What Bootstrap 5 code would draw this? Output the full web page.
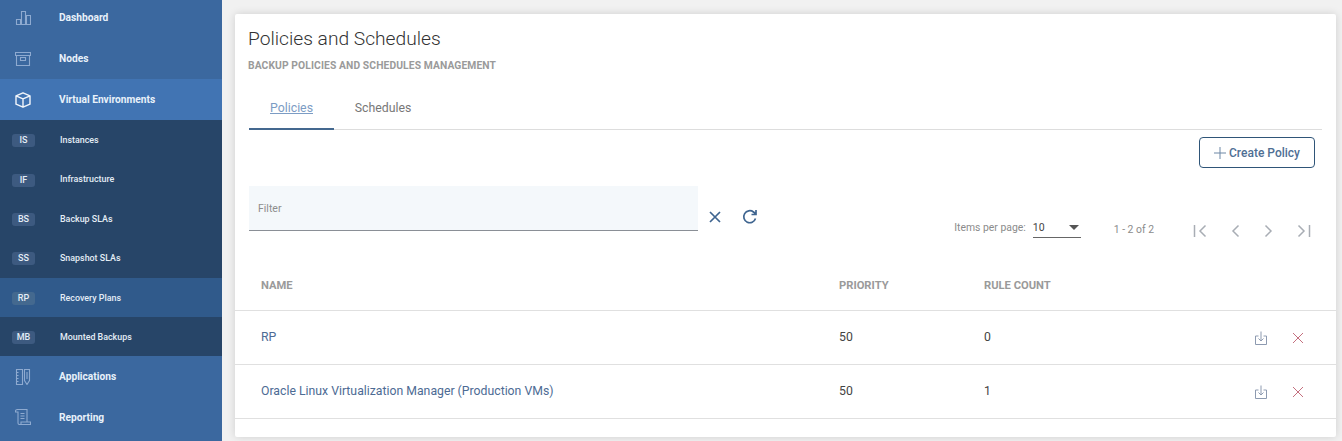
<!DOCTYPE html>
<html lang="en">
<head>
  <meta charset="UTF-8">
  <meta name="viewport" content="width=device-width, initial-scale=1.0">
  <title>Policies and Schedules</title>
  <link href="https://cdn.jsdelivr.net/npm/bootstrap@5.3.2/dist/css/bootstrap.min.css" rel="stylesheet">
  <style>
    html, body { height: 441px; overflow: hidden; }
    body { font-family: Roboto, "Liberation Sans", sans-serif; background: #f1f1f1; color: #333; }
    .shell { height: 441px; }

    .side { width: 222px; flex: none; background: #3b689f; color: #fff; }
    .side-main { height: 41px; font-size: 10.2px; font-weight: 700; color: #e8f1fa; }
    .side-first { height: 38px; padding-bottom: 3px; }
    .side-last { padding-bottom: 4px; }
    .side-main.on { background: #4174b3; }
    .side-ico { width: 59px; flex: none; padding-left: 15px; }
    .side-ico svg { display: block; fill: none; stroke: #8eaad0; stroke-width: 1.1; }
    .side-main.on .side-ico svg { stroke: #f2f6fb; stroke-width: 1.4; }
    .side-sub { height: 39.4px; padding-top: 2px; background: #274568; font-size: 8.9px; font-weight: 500; color: #e4edf6; }
    .side-sub.lit { background: #305a8b; }
    .side-tag { width: 23px; height: 13px; margin: 0 25px 0 12px; flex: none; border-radius: 3px; background: #3d5a80; font-size: 9px; font-weight: 500; line-height: 13px; text-align: center; color: #e4edf6; }
    .side-sub.lit .side-tag { background: #44698f; }

    .page { padding: 14px 6px 4px 13px; min-width: 0; }
    .sheet { height: 423px; border: 0; border-radius: 2px; box-shadow: 0 0 8px rgba(0, 0, 0, .14); overflow: hidden; }
    .sheet-title { margin: 13px 0 0 13px; font-size: 19.2px; font-weight: 300; line-height: 24px; color: #333; }
    .sheet-sub { margin: 9px 0 0 13px; font-size: 10.3px; font-weight: 700; line-height: 12px; letter-spacing: .1px; color: #9a9a9a; text-transform: uppercase; }

    .tabs-row { margin: 19px 14px 0 14px; height: 39px; border-bottom: 1px solid #ddd; flex-wrap: nowrap; }
    .tabs-row .nav-link { width: 85px; height: 39px; padding: 0; font-size: 12.3px; line-height: 35px; text-align: center; color: #777; border-bottom: 2px solid transparent; }
    .tabs-row .nav-link.active { color: #7c9cc4; text-decoration: underline; border-bottom-color: #44688f; }
    .tabs-row .nav-item + .nav-item .nav-link { width: 98px; }

    .btn-make { width: 116px; height: 31px; margin: 7px 21px 0 0; padding: 1px 0 0; border: 1px solid #2f5578; border-radius: 4px; font-size: 12px; font-weight: 500; line-height: 29px; color: #4f6f94; }
    .btn-make svg { margin-right: 3px; vertical-align: -2px; stroke: #6c87a5; }

    .tools { height: 45px; margin: 18px 0 0 14px; }
    .filter-box { width: 449px; height: 45px; flex: none; padding: 0 9px; border: 0; border-bottom: 1px solid #8a8f96; border-radius: 0; background: #f4f8fb; font-size: 10.5px; color: #777; }
    .filter-box::placeholder { color: #8d8d8d; }
    .tool-ico { display: block; flex: none; margin: 24px 0 0 10px; stroke: #3f6590; fill: none; stroke-width: 1.7; }
    .tool-ico.tool-re { margin: 23px 0 0 20px; }
    .pager { margin-left: auto; padding: 31px 25px 0 0; font-size: 10.4px; color: #8b8b8b; }
    .pager-lbl { margin-top: 3px; }
    .per-box { width: 48px; height: 21px; margin-left: 7px; border-bottom: 1px solid #666; color: #444; font-size: 10.5px; line-height: 21px; }
    .per-caret { width: 0; height: 0; margin-right: 2px; border-left: 5px solid transparent; border-right: 5px solid transparent; border-top: 5px solid #555; }
    .pager-count { margin: 5px 39px 0 33px; }
    .pager-btns { margin-top: 7px; gap: 24px; }
    .pager-btns svg { display: block; fill: none; stroke: #a8adb4; stroke-width: 1.5; }

    .grid-t { margin: 31px 0 0; table-layout: fixed; font-size: 12.25px; }
    .grid-t th, .grid-t td { padding: 0; vertical-align: middle; border-bottom: 1px solid #e0e0e0; }
    .grid-t th { height: 48px; padding-top: 2px; font-size: 11.2px; font-weight: 700; color: #9a9a9a; text-transform: uppercase; }
    .grid-t td { height: 54px; color: #444; }
    .grid-t th.col-n, .grid-t td.col-n { padding-left: 26px; width: 604px; }
    .col-p { width: 145px; }
    .col-a { text-align: right; padding-right: 32px !important; }
    .grid-t a { color: #4d6b94; text-decoration: none; }
    .act-ico { display: inline-block; margin-left: 22px; fill: none; vertical-align: middle; }
    .act-save { stroke: #8d9ab0; }
    .act-del { stroke: #c4707f; }
  </style>
</head>
<body>
  <div class="shell d-flex">
    <aside class="side d-flex flex-column">
      <div class="side-main side-first d-flex align-items-center">
        <span class="side-ico"><svg width="16" height="16" viewBox="0 0 16 16"><path d="M1.500 9.500h4v5h-4zM6.500 1.500h4v13h-4zM11.500 5.500h4v9h-4z"/></svg></span>Dashboard
      </div>
      <div class="side-main d-flex align-items-center">
        <span class="side-ico"><svg width="16" height="16" viewBox="0 0 16 16"><path d="M.5 1.500h15v3H.5zM1.500 4.500v10h13v-10M5.500 6.500h5v3h-5z"/></svg></span>Nodes
      </div>
      <div class="side-main on d-flex align-items-center">
        <span class="side-ico"><svg width="16" height="16" viewBox="0 0 16 16"><path d="M8 .8l7 3v8.400l-7 3-7-3V3.800zM1 3.800l7 3 7-3M8 6.800v8.400" stroke-linejoin="round"/></svg></span>Virtual Environments
      </div>
      <div class="side-sub d-flex align-items-center"><span class="side-tag">IS</span>Instances</div>
      <div class="side-sub d-flex align-items-center"><span class="side-tag">IF</span>Infrastructure</div>
      <div class="side-sub d-flex align-items-center"><span class="side-tag">BS</span>Backup SLAs</div>
      <div class="side-sub d-flex align-items-center"><span class="side-tag">SS</span>Snapshot SLAs</div>
      <div class="side-sub lit d-flex align-items-center"><span class="side-tag">RP</span>Recovery Plans</div>
      <div class="side-sub d-flex align-items-center"><span class="side-tag">MB</span>Mounted Backups</div>
      <div class="side-main d-flex align-items-center">
        <span class="side-ico"><svg width="16" height="16" viewBox="0 0 16 16"><path d="M1.500.5h6v15h-6zM1.500 3.500h2M1.500 6.500h2M1.500 9.500h2M1.500 12.500h2M9.500.5h5v11l-2.500 4-2.500-4zM12 3v7"/></svg></span>Applications
      </div>
      <div class="side-main side-last flex-grow-1 d-flex align-items-center">
        <span class="side-ico"><svg width="16" height="16" viewBox="0 0 16 16"><path d="M.5 1.500C1 .5 2 .5 3 .5h9v12.500M.5 1.500V3h2.500V14c0 1 .5 1.500 1.500 1.500h11V13H6v2.500M5.500 4.500h4M5.500 7h4M5.500 9.500h4"/></svg></span>Reporting
      </div>
    </aside>

    <main class="page flex-grow-1">
      <div class="card sheet">
        <h1 class="sheet-title">Policies and Schedules</h1>
        <div class="sheet-sub">Backup policies and schedules management</div>

        <ul class="nav tabs-row">
          <li class="nav-item"><a class="nav-link active" href="#">Policies</a></li>
          <li class="nav-item"><a class="nav-link" href="#">Schedules</a></li>
        </ul>

        <div class="d-flex justify-content-end">
          <button type="button" class="btn btn-make">
            <svg width="12" height="12" viewBox="0 0 12 12"><path d="M6 0v12M0 6h12"/></svg>Create Policy
          </button>
        </div>

        <div class="tools d-flex">
          <input type="text" class="form-control filter-box" placeholder="Filter">
          <svg class="tool-ico" width="14" height="14" viewBox="0 0 14 14"><path d="M2 2l10 10M12 2 2 12"/></svg>
          <svg class="tool-ico tool-re" width="16" height="16" viewBox="0 0 16 16"><path d="M13.500 9.500A6 6 0 1 1 11.500 3L14 5M14 1v4.500H9.500"/></svg>
          <div class="pager d-flex align-items-start">
            <span class="pager-lbl">Items per page:</span>
            <div class="per-box d-flex align-items-center justify-content-between">10<span class="per-caret"></span></div>
            <span class="pager-count">1 - 2 of 2</span>
            <div class="pager-btns d-flex">
              <svg width="14" height="14" viewBox="0 0 14 14"><path d="M1.500 1v12M12.500 1.500 7 7l5.500 5.500"/></svg>
              <svg width="9" height="14" viewBox="0 0 9 14"><path d="M7.500 1.500 2 7l5.500 5.500"/></svg>
              <svg width="9" height="14" viewBox="0 0 9 14"><path d="M1.500 1.500 7 7l-5.500 5.500"/></svg>
              <svg width="14" height="14" viewBox="0 0 14 14"><path d="M12.500 1v12M1.500 1.500 7 7l-5.500 5.500"/></svg>
            </div>
          </div>
        </div>

        <table class="table grid-t">
          <thead>
            <tr><th class="col-n">Name</th><th class="col-p">Priority</th><th>Rule Count</th><th class="col-a"></th></tr>
          </thead>
          <tbody>
            <tr>
              <td class="col-n"><a href="#">RP</a></td><td>50</td><td>0</td>
              <td class="col-a">
                <svg class="act-ico act-save" width="12" height="14" viewBox="0 0 12 14"><path d="M3.500 5H.5v8.500h11V5H8.500M6 .5V10M3.500 7.500 6 10l2.500-2.500"/></svg>
                <svg class="act-ico act-del" width="12" height="12" viewBox="0 0 12 12"><path d="M1 1l10 10M11 1 1 11"/></svg>
              </td>
            </tr>
            <tr>
              <td class="col-n"><a href="#">Oracle Linux Virtualization Manager (Production VMs)</a></td><td>50</td><td>1</td>
              <td class="col-a">
                <svg class="act-ico act-save" width="12" height="14" viewBox="0 0 12 14"><path d="M3.500 5H.5v8.500h11V5H8.500M6 .5V10M3.500 7.500 6 10l2.500-2.500"/></svg>
                <svg class="act-ico act-del" width="12" height="12" viewBox="0 0 12 12"><path d="M1 1l10 10M11 1 1 11"/></svg>
              </td>
            </tr>
          </tbody>
        </table>
      </div>
    </main>
  </div>
  <script src="https://cdn.jsdelivr.net/npm/bootstrap@5.3.2/dist/js/bootstrap.bundle.min.js"></script>
</body>
</html>
